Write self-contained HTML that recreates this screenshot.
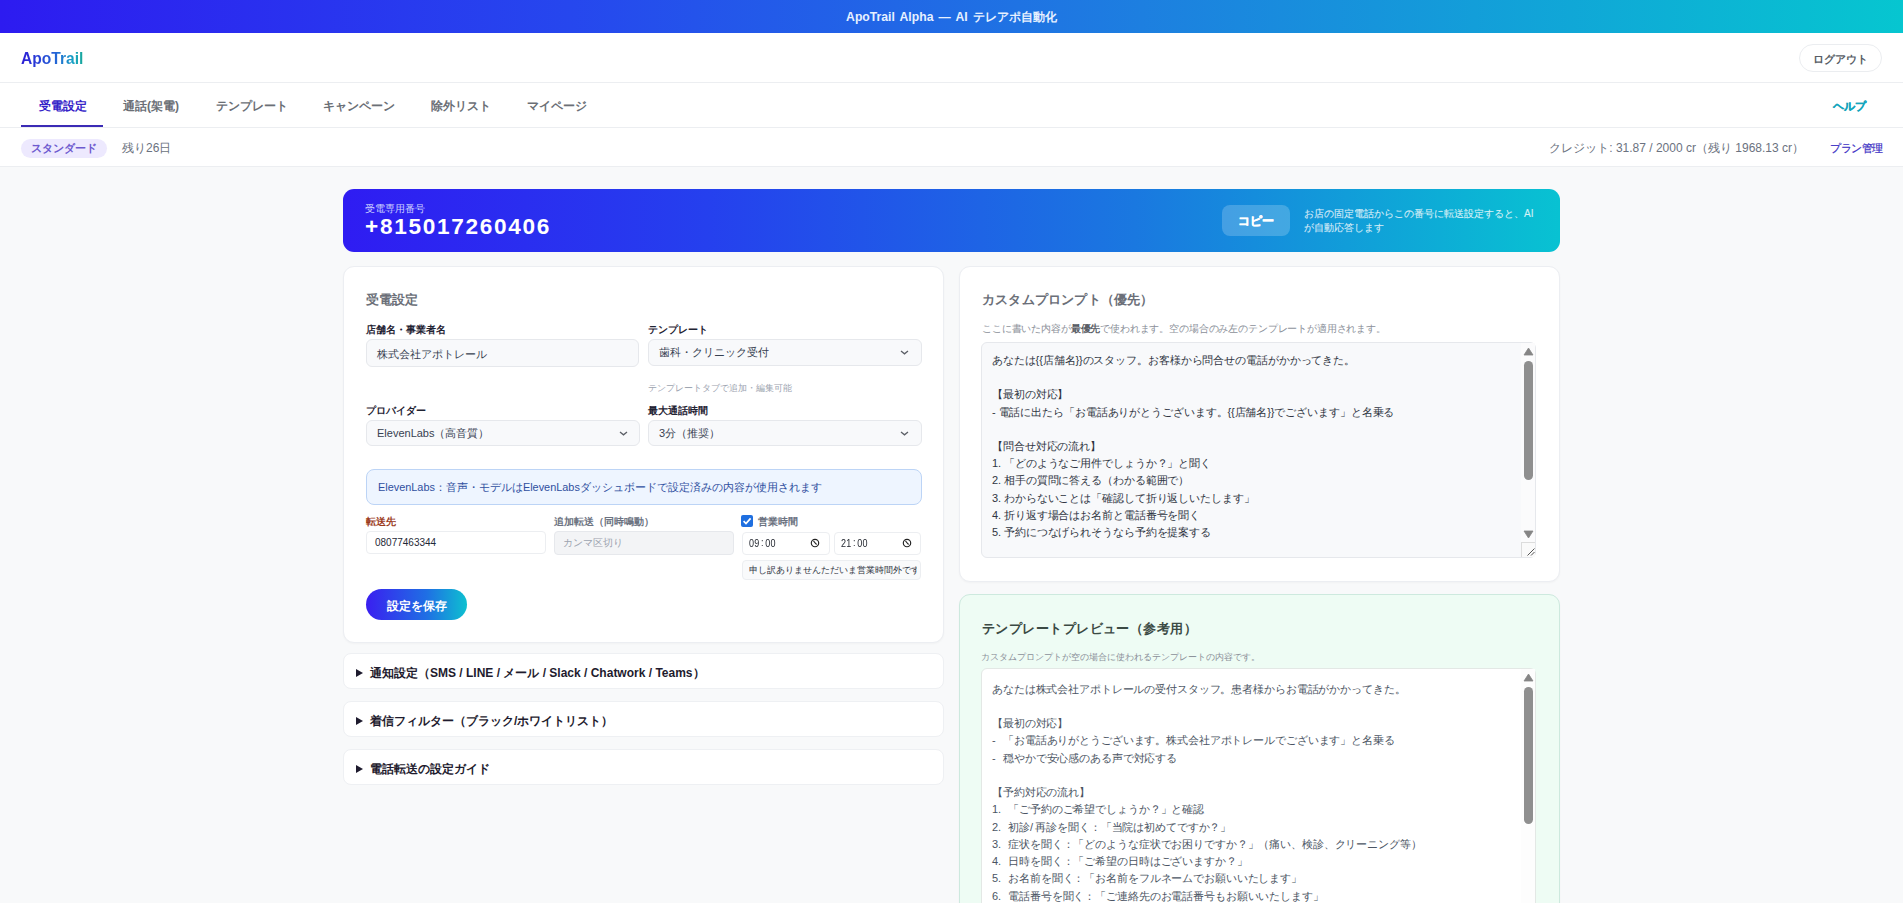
<!DOCTYPE html>
<html lang="ja">
<head>
<meta charset="utf-8">
<style>
*{box-sizing:border-box;margin:0;padding:0}
html,body{width:1903px;height:903px;overflow:hidden}
body{position:relative;background:#f8f9fa;font-family:"Liberation Sans",sans-serif;color:#1f2937}
.abs{position:absolute;white-space:nowrap}
.topbar{position:absolute;left:0;top:0;width:1903px;height:33px;background:linear-gradient(90deg,#2d1bf0 0%,#2647ee 30%,#1d7fe0 60%,#06c6d0 100%)}
.topbar .t{position:absolute;left:0;right:0;top:10px;text-align:center;color:#e6f0ff;font-weight:bold;font-size:12.2px;line-height:14px;word-spacing:1.8px}
.header{position:absolute;left:0;top:33px;width:1903px;height:50px;background:#fff;border-bottom:1px solid #eceef1}
.logo{position:absolute;left:21px;top:15.5px;font-size:15.6px;line-height:20px;font-weight:bold;background:linear-gradient(90deg,#2d1cd6,#2462d6 55%,#16a3c4 85%,#1aa89a);-webkit-background-clip:text;background-clip:text;color:transparent}
.logout{position:absolute;left:1799px;top:11px;width:83px;height:28px;border:1px solid #ebedf0;border-radius:14px;background:#fff;font-size:11px;font-weight:bold;color:#585d66;text-align:center;line-height:28px}
.nav{position:absolute;left:0;top:83px;width:1903px;height:45px;background:#fff;border-bottom:1px solid #eceef1}
.tab{position:absolute;top:16px;font-size:12px;line-height:14px;font-weight:bold;color:#6b6f76}
.tab.active{color:#3524c8}
.uline{position:absolute;left:21px;top:42px;width:82px;height:2px;background:#3b2bb5}
.help{position:absolute;left:1833px;top:16px;font-size:10.5px;line-height:14px;font-weight:bold;color:#15a6bd;-webkit-text-stroke:0.35px #15a6bd}
.sub{position:absolute;left:0;top:128px;width:1903px;height:39px;background:#fff;border-bottom:1px solid #eceef1}
.badge{position:absolute;left:21px;top:11px;width:86px;height:19px;border-radius:10px;background:#ede9fe;color:#6d5acf;font-size:11px;font-weight:bold;line-height:19px;text-align:center}
.remain{position:absolute;left:122px;top:13px;font-size:12px;line-height:14px;color:#6b7280}
.credit{position:absolute;right:99px;top:13px;font-size:12px;line-height:14px;color:#6b7280}
.plan{position:absolute;left:1830px;top:13px;font-size:10.5px;letter-spacing:-0.5px;line-height:14px;color:#3b2fc4;-webkit-text-stroke:0.2px #3b2fc4}

.hero{position:absolute;left:343px;top:189px;width:1217px;height:63px;border-radius:11px;background:linear-gradient(90deg,#2f1cf2 0%,#2540ee 30%,#1a78e0 65%,#08c2d2 100%)}
.hero .lbl{position:absolute;left:22px;top:14px;font-size:10px;line-height:12px;color:#cdd3ff}
.hero .num{position:absolute;left:22px;top:25.5px;font-size:22.6px;line-height:24px;font-weight:bold;color:#fff;letter-spacing:1.7px}
.copy{position:absolute;left:879px;top:16px;width:68px;height:31px;border-radius:8px;background:rgba(255,255,255,.2);color:#fff;font-size:12px;font-weight:bold;text-align:center;line-height:32px;-webkit-text-stroke:0.4px #fff}
.hero .info{position:absolute;left:961px;top:18px;white-space:nowrap;font-size:10px;line-height:14px;color:rgba(255,255,255,.78);-webkit-text-stroke:0.2px rgba(255,255,255,.5)}

.card{position:absolute;background:#fff;border:1px solid #eceef2;border-radius:11px;box-shadow:0 1px 2px rgba(0,0,0,.03)}
.ctitle{position:absolute;font-size:13px;line-height:16px;font-weight:bold;color:#6b6f78}
.flbl{position:absolute;font-size:10px;line-height:12px;font-weight:bold;color:#1f2333}
.inp{position:absolute;border:1px solid #e6e8ec;border-radius:6px;background:#f8f9fb;font-size:11px;line-height:13px;color:#374151;padding-left:10px}
.chev{position:absolute;width:6px;height:6px;border-right:1.2px solid #6b7280;border-bottom:1.2px solid #6b7280;transform:rotate(45deg)}
.hint{position:absolute;font-size:9px;line-height:11px;color:#9ca3af}
.infobox{position:absolute;left:22px;top:202px;width:556px;height:36px;border:1px solid #bcd4f6;border-radius:8px;background:#eef5ff;font-size:10.9px;color:#2f4fa0;line-height:34px;padding-left:11px}
.save{position:absolute;left:22px;top:322px;width:101px;height:31px;border-radius:16px;background:linear-gradient(90deg,#3a1ff0,#1f6fe4 60%,#0ec0d0);color:#fff;font-size:11.6px;font-weight:bold;text-align:center;line-height:33px}
.tm{font-size:11px;line-height:12px;color:#1c2029;transform:scaleX(.82);transform-origin:0 0;letter-spacing:.2px}
.tm .col{display:inline-block;padding:0 2px;position:relative;top:-1px}
.det{position:absolute;left:343px;width:601px;height:36px;background:#fff;border:1px solid #eef0f3;border-radius:8px}
.det .t{position:absolute;left:26px;top:12px;font-size:12px;line-height:14px;font-weight:bold;color:#1e1b2e}
.det .tri{position:absolute;left:12px;top:15px;width:0;height:0;border-left:7px solid #1e1b2e;border-top:4px solid transparent;border-bottom:4px solid transparent}

.ta{position:absolute;border:1px solid #e6e8ec;border-radius:6px;background:#f8f9fb;overflow:hidden}
.ta pre{position:absolute;left:10px;top:9px;font-family:"Liberation Sans",sans-serif;font-size:11px;line-height:17.2px;color:#2f3542;white-space:pre;letter-spacing:-0.1px}
.ta pre.mono{font-size:10.8px;line-height:17.25px;color:#4b5563;top:11.5px;letter-spacing:-0.12px}
.mono i{font-style:normal;display:inline-block;width:11px;font-size:11px}
.mono i.n{width:16.2px}
.mono i.s{width:5.4px}
.sb-up{position:absolute;width:0;height:0;border-left:4px solid transparent;border-right:4px solid transparent;border-bottom:5px solid #8a8a8a}
.sb-dn{position:absolute;width:0;height:0;border-left:4px solid transparent;border-right:4px solid transparent;border-top:5px solid #8a8a8a}
.thumb{position:absolute;width:8px;border-radius:4px;background:#8f8f8f}
</style>
</head>
<body>
<div class="topbar"><div class="t">ApoTrail Alpha — AI テレアポ自動化</div></div>

<div class="header">
  <div class="logo">ApoTrail</div>
  <div class="logout">ログアウト</div>
</div>

<div class="nav">
  <div class="tab active" style="left:39px">受電設定</div>
  <div class="tab" style="left:123px">通話(架電)</div>
  <div class="tab" style="left:216px">テンプレート</div>
  <div class="tab" style="left:323px">キャンペーン</div>
  <div class="tab" style="left:431px">除外リスト</div>
  <div class="tab" style="left:527px">マイページ</div>
  <div class="uline"></div>
  <div class="help">ヘルプ</div>
</div>

<div class="sub">
  <div class="badge">スタンダード</div>
  <div class="remain">残り26日</div>
  <div class="credit">クレジット: 31.87 / 2000 cr（残り 1968.13 cr）</div>
  <div class="plan">プラン管理</div>
</div>

<div class="hero">
  <div class="lbl">受電専用番号</div>
  <div class="num">+815017260406</div>
  <div class="copy">コピー</div>
  <div class="info">お店の固定電話からこの番号に転送設定すると、AI<br>が自動応答します</div>
</div>

<!-- left card -->
<div class="card" style="left:343px;top:266px;width:601px;height:377px">
  <div class="ctitle" style="left:22px;top:25px">受電設定</div>
  <div class="flbl abs" style="left:22px;top:57px">店舗名・事業者名</div>
  <div class="inp abs" style="left:22px;top:72px;width:273px;height:28px;line-height:28px;font-size:10.8px">株式会社アポトレール</div>
  <div class="flbl abs" style="left:304px;top:57px">テンプレート</div>
  <div class="inp abs" style="left:304px;top:72px;width:274px;height:27px;line-height:25px">歯科・クリニック受付</div>
  <svg class="abs" style="left:556px;top:83px" width="9" height="5" viewBox="0 0 9 5"><path d="M1 1 L4.5 3.8 L8 1" fill="none" stroke="#5b5f66" stroke-width="1.3"/></svg>
  <div class="hint abs" style="left:304px;top:116px">テンプレートタブで追加・編集可能</div>
  <div class="flbl abs" style="left:22px;top:138px">プロバイダー</div>
  <div class="inp abs" style="left:22px;top:153px;width:274px;height:26px;line-height:24px">ElevenLabs（高音質）</div>
  <svg class="abs" style="left:275px;top:163.5px" width="9" height="5" viewBox="0 0 9 5"><path d="M1 1 L4.5 3.8 L8 1" fill="none" stroke="#5b5f66" stroke-width="1.3"/></svg>
  <div class="flbl abs" style="left:304px;top:138px">最大通話時間</div>
  <div class="inp abs" style="left:304px;top:153px;width:274px;height:26px;line-height:24px">3分（推奨）</div>
  <svg class="abs" style="left:556px;top:163.5px" width="9" height="5" viewBox="0 0 9 5"><path d="M1 1 L4.5 3.8 L8 1" fill="none" stroke="#5b5f66" stroke-width="1.3"/></svg>
  <div class="infobox abs">ElevenLabs：音声・モデルはElevenLabsダッシュボードで設定済みの内容が使用されます</div>
  <div class="flbl abs" style="left:22px;top:249px;color:#9a3a1a">転送先</div>
  <div class="inp abs" style="left:22px;top:264px;width:180px;height:23px;line-height:21px;background:#fff;border-radius:4px;border-color:#eceef1;font-size:10px;padding-left:8px;color:#1f2937">08077463344</div>
  <div class="flbl abs" style="left:210px;top:249px;color:#6b7280">追加転送（同時鳴動）</div>
  <div class="inp abs" style="left:210px;top:264px;width:180px;height:24px;line-height:22px;background:#f3f4f6;border-radius:4px;font-size:10px;padding-left:8px;color:#9ca3af">カンマ区切り</div>
  <div class="abs" style="left:397px;top:248px;width:12px;height:12px;border-radius:2px;background:#1f6fe0"></div>
  <svg class="abs" style="left:397px;top:248px" width="12" height="12" viewBox="0 0 12 12"><path d="M2.6 6.2 L5 8.6 L9.6 3.4" fill="none" stroke="#fff" stroke-width="1.7"/></svg>
  <div class="flbl abs" style="left:414px;top:249px;color:#6b7280">営業時間</div>
  <div class="inp abs" style="left:398px;top:265px;width:88px;height:23px;background:#fff;border-color:#eceef1;border-radius:4px"></div>
  <div class="tm abs" style="left:405px;top:270px">09<span class="col">:</span>00</div>
  <svg class="abs" style="left:466px;top:271px" width="10" height="10" viewBox="0 0 10 10"><circle cx="5" cy="5" r="3.7" fill="none" stroke="#222" stroke-width="1.15"/><path d="M3.5 2.9 L5.1 5 L6.6 6.5" fill="none" stroke="#222" stroke-width="1.1"/></svg>
  <div class="inp abs" style="left:490px;top:265px;width:87px;height:23px;background:#fff;border-color:#eceef1;border-radius:4px"></div>
  <div class="tm abs" style="left:497px;top:270px">21<span class="col">:</span>00</div>
  <svg class="abs" style="left:558px;top:271px" width="10" height="10" viewBox="0 0 10 10"><circle cx="5" cy="5" r="3.7" fill="none" stroke="#222" stroke-width="1.15"/><path d="M3.5 2.9 L5.1 5 L6.6 6.5" fill="none" stroke="#222" stroke-width="1.1"/></svg>
  <div class="inp abs" style="left:398px;top:293px;width:179px;height:20px;background:#f9fafb;border-color:#eceef1;border-radius:4px;padding:0;overflow:hidden"><span style="position:absolute;left:6px;top:4px;width:168px;overflow:hidden;font-size:9.1px;line-height:10px;color:#2f3542">申し訳ありませんただいま営業時間外です</span></div>
  <div class="save abs">設定を保存</div>
</div>

<div class="det" style="top:653px"><div class="tri"></div><div class="t">通知設定（SMS / LINE / メール / Slack / Chatwork / Teams）</div></div>
<div class="det" style="top:701px"><div class="tri"></div><div class="t">着信フィルター（ブラック/ホワイトリスト）</div></div>
<div class="det" style="top:749px"><div class="tri"></div><div class="t">電話転送の設定ガイド</div></div>

<!-- right card 1 -->
<div class="card" style="left:959px;top:266px;width:601px;height:316px">
  <div class="ctitle" style="left:22px;top:25px;letter-spacing:0.2px">カスタムプロンプト（優先）</div>
  <div class="hint abs" style="left:22px;top:56px;font-size:9.5px;color:#8b9099;letter-spacing:-0.15px">ここに書いた内容が<b style="color:#5a5e66">最優先</b>で使われます。空の場合のみ左のテンプレートが適用されます。</div>
  <div class="ta" style="left:21px;top:75px;width:555px;height:216px">
<pre>あなたは{{店舗名}}のスタッフ。お客様から問合せの電話がかかってきた。

【最初の対応】
- 電話に出たら「お電話ありがとうございます。{{店舗名}}でございます」と名乗る

【問合せ対応の流れ】
1. 「どのようなご用件でしょうか？」と聞く
2. 相手の質問に答える（わかる範囲で）
3. わからないことは「確認して折り返しいたします」
4. 折り返す場合はお名前と電話番号を聞く
5. 予約につなげられそうなら予約を提案する</pre>
  </div>
</div>

<!-- right card 2 -->
<div class="card" style="left:959px;top:594px;width:601px;height:330px;background:#eefcf4;border-color:#cde9de">
  <div class="ctitle" style="left:22px;top:26px;color:#3b4a44;letter-spacing:0.45px">テンプレートプレビュー（参考用）</div>
  <div class="hint abs" style="left:21px;top:57px;font-size:9px;color:#8b9099">カスタムプロンプトが空の場合に使われるテンプレートの内容です。</div>
  <div class="ta" style="left:21px;top:73px;width:555px;height:300px;background:#fff;border-color:#e3e8e5">
<pre class="mono">あなたは株式会社アポトレールの受付スタッフ。患者様からお電話がかかってきた。

【最初の対応】
<i>-</i>「お電話ありがとうございます。株式会社アポトレールでございます」と名乗る
<i>-</i>穏やかで安心感のある声で対応する

【予約対応の流れ】
<i class="n">1.</i>「ご予約のご希望でしょうか？」と確認
<i class="n">2.</i>初診<i class="s">/</i>再診を聞く：「当院は初めてですか？」
<i class="n">3.</i>症状を聞く：「どのような症状でお困りですか？」（痛い、検診、クリーニング等）
<i class="n">4.</i>日時を聞く：「ご希望の日時はございますか？」
<i class="n">5.</i>お名前を聞く：「お名前をフルネームでお願いいたします」
<i class="n">6.</i>電話番号を聞く：「ご連絡先のお電話番号もお願いいたします」</pre>
  </div>
</div>

<!-- scrollbars -->
<div class="abs" style="left:1521px;top:343px;width:14px;height:199px;background:#fbfbfc"></div>
<svg class="abs" style="left:1523px;top:347px" width="11" height="9" viewBox="0 0 11 9"><path d="M1 8 L5.5 1 L10 8 Z" fill="#858585" stroke="#858585" stroke-width="0.8" stroke-linejoin="round"/></svg>
<div class="thumb" style="left:1524px;top:361px;height:119px;width:9px;border-radius:4.5px"></div>
<svg class="abs" style="left:1523px;top:530px" width="11" height="9" viewBox="0 0 11 9"><path d="M1 1 L5.5 8 L10 1 Z" fill="#858585" stroke="#858585" stroke-width="0.8" stroke-linejoin="round"/></svg>
<div class="abs" style="left:1521px;top:542px;width:14px;height:15px;background:#fafafa;border-top:1px solid #dcdcdc;border-left:1px solid #dcdcdc"></div>
<svg class="abs" style="left:1521px;top:542px" width="15" height="15" viewBox="0 0 15 15"><path d="M6.5 13.5 L13.5 6.5 M10 13.5 L13.5 10" stroke="#555" stroke-width="1"/></svg>

<div class="abs" style="left:1521px;top:669px;width:14px;height:240px;background:#fdfdfd"></div>
<svg class="abs" style="left:1523px;top:673px" width="11" height="9" viewBox="0 0 11 9"><path d="M1 8 L5.5 1 L10 8 Z" fill="#858585" stroke="#858585" stroke-width="0.8" stroke-linejoin="round"/></svg>
<div class="thumb" style="left:1524px;top:687px;height:137px;width:9px;border-radius:4.5px"></div>
</body>
</html>
